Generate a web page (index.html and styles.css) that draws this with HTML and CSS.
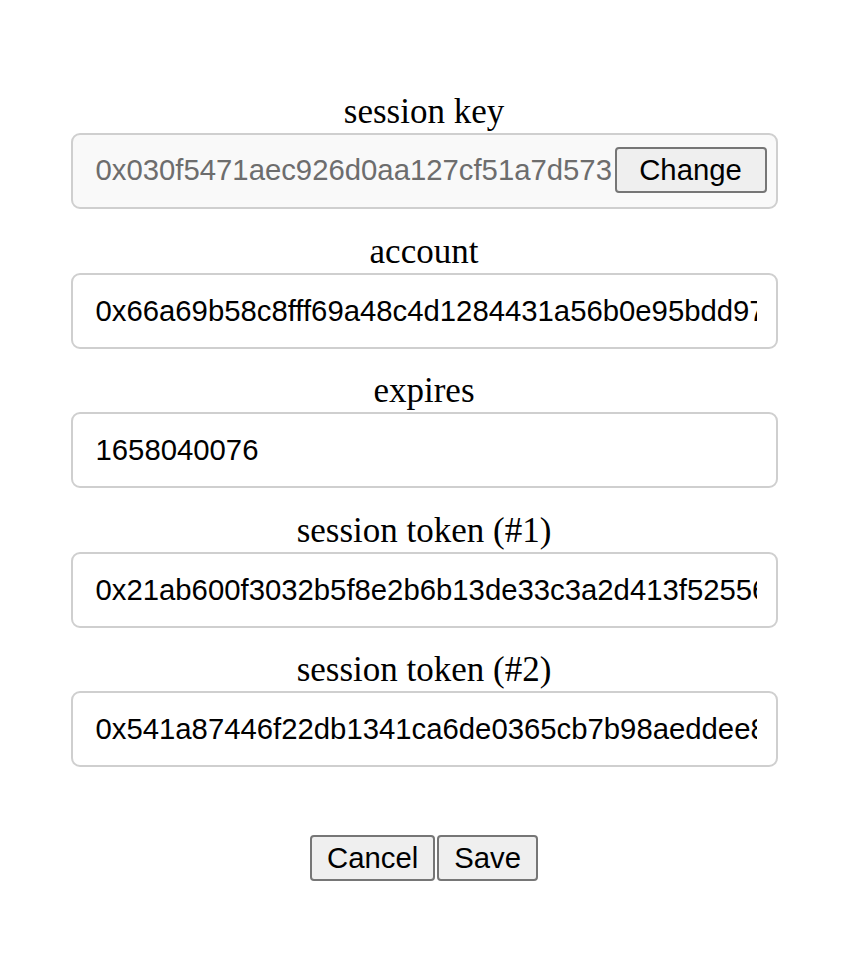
FILE: index.html
```html
<!DOCTYPE html>
<html>
<head>
<meta charset="utf-8">
<link rel="stylesheet" href="styles.css">
</head>
<body>
<main class="form">
  <div class="field">
    <div class="label">session key</div>
    <div class="box box-disabled">
      <span class="value">0x030f5471aec926d0aa127cf51a7d573</span>
      <button class="btn btn-change">Change</button>
    </div>
  </div>
  <div class="field">
    <div class="label">account</div>
    <div class="box"><span class="value">0x66a69b58c8fff69a48c4d1284431a56b0e95bdd97a3f</span></div>
  </div>
  <div class="field">
    <div class="label">expires</div>
    <div class="box"><span class="value">1658040076</span></div>
  </div>
  <div class="field">
    <div class="label">session token (#1)</div>
    <div class="box"><span class="value">0x21ab600f3032b5f8e2b6b13de33c3a2d413f52556c8e</span></div>
  </div>
  <div class="field">
    <div class="label">session token (#2)</div>
    <div class="box"><span class="value">0x541a87446f22db1341ca6de0365cb7b98aeddee8a1d2</span></div>
  </div>
  <div class="actions">
    <button class="btn btn-action">Cancel</button><button class="btn btn-action">Save</button>
  </div>
</main>
</body>
</html>
```

FILE: styles.css
```css
html, body {
  margin: 0;
  padding: 0;
  background: #ffffff;
}

.form {
  width: 707px;
  margin: 0 auto;
  padding-top: 92px;
  display: flex;
  flex-direction: column;
}

.field {
  display: flex;
  flex-direction: column;
  margin-bottom: 22.5px;
}

.label {
  font-family: "Liberation Serif", "Times New Roman", serif;
  font-size: 35px;
  line-height: 40px;
  color: #000;
  text-align: center;
  margin-bottom: 1px;
}

.box {
  box-sizing: border-box;
  height: 76px;
  border: 2px solid #cfcfcf;
  border-radius: 9px;
  background: #fff;
  display: flex;
  align-items: center;
  padding: 0 19px 0 23px;
  overflow: hidden;
}

.box-disabled {
  background: #f9f9f9;
  padding-right: 9px;
  padding-bottom: 2px;
}

.value {
  flex: 1;
  min-width: 0;
  overflow: hidden;
  white-space: nowrap;
  font-family: "Liberation Sans", Arial, sans-serif;
  font-size: 29.3px;
  color: #000;
}

.box-disabled .value {
  color: #6d6d6d;
}

.btn {
  box-sizing: border-box;
  height: 46px;
  margin: 0;
  padding: 0 15px;
  font-family: "Liberation Sans", Arial, sans-serif;
  font-size: 29.3px;
  color: #000;
  background: #efefef;
  border: 2px solid #767676;
  border-radius: 4px;
}

.btn-change {
  flex: none;
  width: 152px;
  margin-left: 2px;
}

.actions {
  display: flex;
  justify-content: center;
  gap: 2px;
  margin-top: 45.5px;
}
```
